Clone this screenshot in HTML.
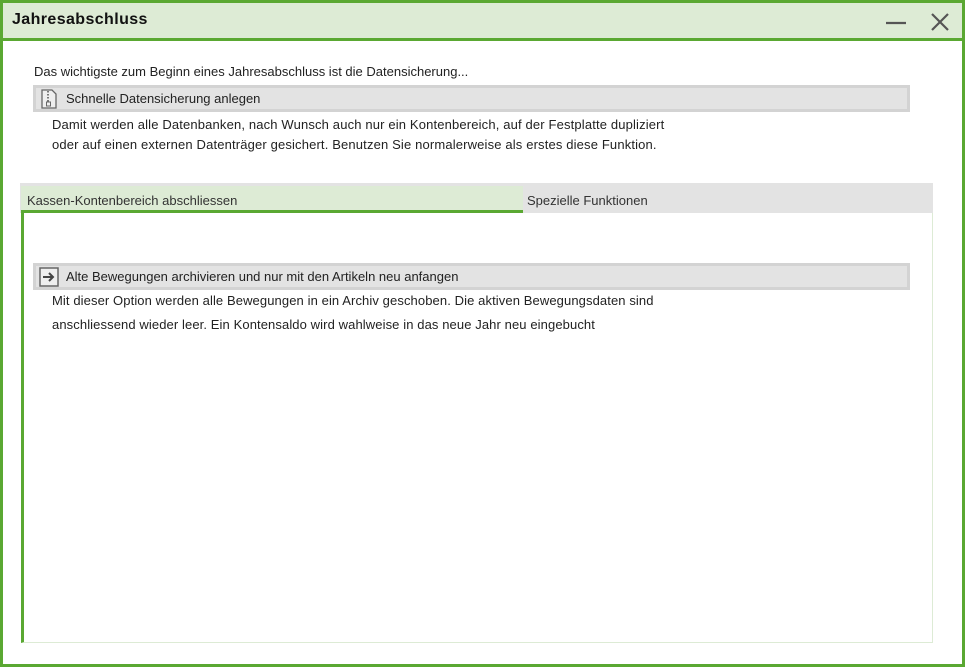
<!DOCTYPE html>
<html><head><meta charset="utf-8"><style>
*{margin:0;padding:0;box-sizing:border-box}
body{width:965px;height:667px;background:#fff;font-family:"Liberation Sans",sans-serif;font-size:13px;color:#222;position:relative;overflow:hidden}
.frame{position:absolute;left:0;top:0;width:965px;height:667px;border:3px solid #5aa832}
.title{position:absolute;left:3px;top:3px;width:959px;height:38px;background:#ddebd5;border-bottom:3px solid #5aa832}
.title span{position:absolute;left:9px;top:8px;font-weight:bold;font-size:16px;color:#111;letter-spacing:.4px}
.t{position:absolute;white-space:nowrap}
.bar{position:absolute;left:33px;width:877px;height:27px;background:#e3e3e3;border:3px solid #d3d3d3}
.bar span{position:absolute;left:30px;top:3px}
</style></head><body>
<div class="frame"></div>
<div class="title"><span>Jahresabschluss</span>
<svg style="position:absolute;left:883px;top:10px" width="20" height="20"><line x1="0" y1="10" x2="20" y2="10" stroke="#555" stroke-width="2.2"/></svg>
<svg style="position:absolute;left:927px;top:9px" width="20" height="20"><path d="M2 2L18 18M18 2L2 18" stroke="#555" stroke-width="2.2"/></svg>
</div>
<div class="t" style="left:34px;top:64px">Das wichtigste zum Beginn eines Jahresabschluss ist die Datensicherung...</div>
<div class="bar" style="top:85px">
<svg style="position:absolute;left:4px;top:1px" width="18" height="20"><path d="M2 1H12L16 5V19H2Z" fill="#eee" stroke="#666" stroke-width="1.3"/><path d="M8 2V14" stroke="#777" stroke-width="2" stroke-dasharray="1.5 1.5"/><rect x="6.5" y="13" width="4" height="4" fill="none" stroke="#666"/></svg>
<span>Schnelle Datensicherung anlegen</span></div>
<div class="t" style="left:52px;top:117px;letter-spacing:.15px">Damit werden alle Datenbanken, nach Wunsch auch nur ein Kontenbereich, auf der Festplatte dupliziert</div>
<div class="t" style="left:52px;top:137px;letter-spacing:.15px">oder auf einen externen Datenträger gesichert. Benutzen Sie normalerweise als erstes diese Funktion.</div>
<div style="position:absolute;left:20px;top:183px;width:913px;height:30px;background:#e3e3e3"></div>
<div style="position:absolute;left:21px;top:186px;width:502px;height:27px;background:#ddebd5;border-bottom:3px solid #5aa832"></div>
<div class="t" style="left:27px;top:193px;color:#333">Kassen-Kontenbereich abschliessen</div>
<div class="t" style="left:527px;top:193px;color:#333">Spezielle Funktionen</div>
<div style="position:absolute;left:21px;top:213px;width:912px;height:430px;border-left:3px solid #5aa832;border-right:1px solid #ddebd5;border-bottom:1px solid #ddebd5"></div>
<div class="bar" style="top:263px">
<svg style="position:absolute;left:3px;top:1px" width="20" height="20"><rect x="1" y="1" width="18" height="18" fill="#eee" stroke="#666" stroke-width="1.5"/><path d="M4 10H14M10 6L14 10L10 14" fill="none" stroke="#444" stroke-width="2"/></svg>
<span>Alte Bewegungen archivieren und nur mit den Artikeln neu anfangen</span></div>
<div class="t" style="left:52px;top:293px;letter-spacing:.1px">Mit dieser Option werden alle Bewegungen in ein Archiv geschoben. Die aktiven Bewegungsdaten sind</div>
<div class="t" style="left:52px;top:317px;letter-spacing:.1px">anschliessend wieder leer. Ein Kontensaldo wird wahlweise in das neue Jahr neu eingebucht</div>
</body></html>
